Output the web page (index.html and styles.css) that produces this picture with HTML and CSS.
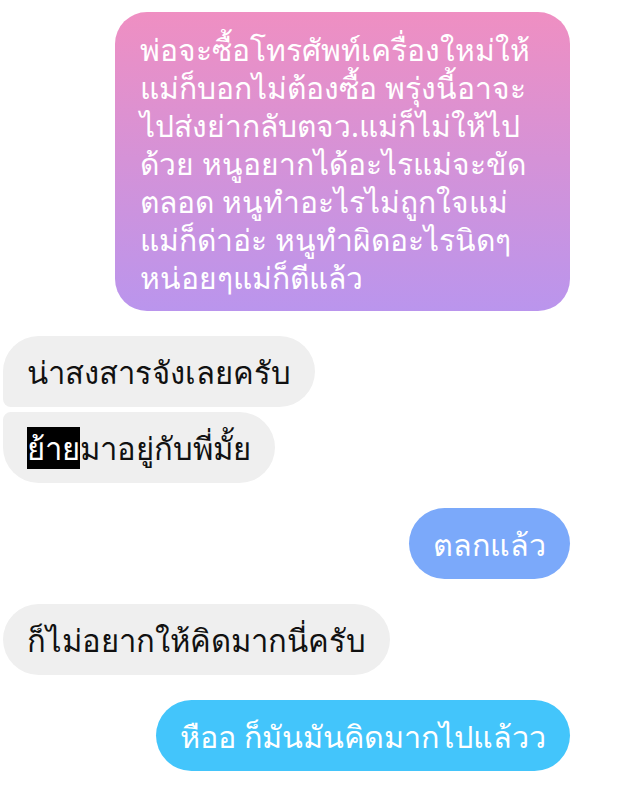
FILE: index.html
```html
<!DOCTYPE html>
<html>

<head>
    <meta charset="utf-8">
    <title>Chat</title>
    <link rel="stylesheet" href="styles.css">
</head>

<body>
    <div class="chat">
        <div class="bubble me gradient">พ่อจะซื้อโทรศัพท์เครื่องใหม่ให้<br>แม่ก็บอกไม่ต้องซื้อ พรุ่งนี้อาจะ<br>ไปส่งย่ากลับตจว.แม่ก็ไม่ให้ไป<br>ด้วย หนูอยากได้อะไรแม่จะขัด<br>ตลอด หนูทำอะไรไม่ถูกใจแม่<br>แม่ก็ด่าอ่ะ หนูทำผิดอะไรนิดๆ<br>หน่อยๆแม่ก็ตีแล้ว</div>

        <div class="bubble them first">น่าสงสารจังเลยครับ</div>
        <div class="bubble them last close"><span class="mark">ย้าย</span>มาอยู่กับพี่มั้ย</div>

        <div class="bubble me blue">ตลกแล้ว</div>

        <div class="bubble them">ก็ไม่อยากให้คิดมากนี่ครับ</div>

        <div class="bubble me cyan">หืออ ก็มันมันคิดมากไปแล้วว</div>
    </div>
</body>

</html>
```

FILE: styles.css
```css
body {
    margin: 0;
    background-color: #fff;
    font-family: "Noto Sans", sans-serif;
}

.chat {
    display: flex;
    flex-direction: column;
    gap: 25px;
    padding: 12px 48px 0 3px;
}

.bubble {
    font-size: 30.5px;
    line-height: 38px;
    padding: 17px 24px 16px;
    border-radius: 36px;
}

.me {
    align-self: flex-end;
    color: #fff;
}

.them {
    align-self: flex-start;
    background-color: #efefef;
    color: #111;
    font-size: 31px;
}

.gradient {
    font-size: 30px;
    background: linear-gradient(#ef8fc2, #ba95ed);
    border-radius: 32px;
    padding: 19px 40px 14px 25px;
}

.blue {
    background-color: #7ba9fa;
}

.cyan {
    background-color: #43c5fb;
}

.first {
    border-bottom-left-radius: 8px;
}

.last {
    border-top-left-radius: 8px;
}

.close {
    margin-top: -20px;
}

.mark {
    background-color: #000;
    color: #fff;
}
```
